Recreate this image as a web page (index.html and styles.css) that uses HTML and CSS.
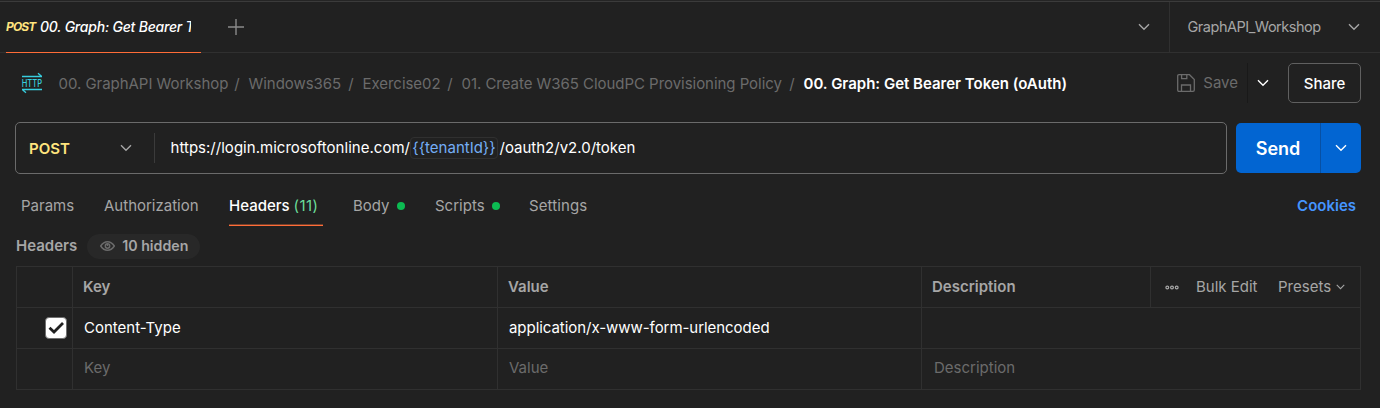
FILE: index.html
```html
<!DOCTYPE html>
<html lang="en">
<head>
<meta charset="utf-8">
<title>GraphAPI Workshop</title>
<link rel="stylesheet" href="styles.css">
</head>
<body>
<svg class="defs" width="0" height="0"><symbol id="chevron" viewBox="0 0 12 8"><path d="M1 1.2 6 6.2l5-5" fill="none" stroke="currentColor" stroke-width="1.4"/></symbol></svg>
<header class="tabbar">
  <div class="tab"><span class="tab-method">POST</span><span class="tab-title">00. Graph: Get Bearer Token</span></div>
  <svg class="plus" width="16" height="16" viewBox="0 0 16 16"><path d="M8 0v16M0 8h16" stroke="currentColor" stroke-width="1.4"/></svg>
  <div class="tab-menu"><svg class="chev"><use href="#chevron"/></svg></div>
  <div class="env"><span>GraphAPI_Workshop</span><svg class="chev"><use href="#chevron"/></svg></div>
</header>
<section class="titlebar">
  <svg class="http" width="22" height="22" viewBox="0 0 22 22"><path d="M1 4.500h20M17 1.300 20.500 4.300M21 17.500H1M5 20.700 1.500 17.700" fill="none" stroke="currentColor" stroke-width="1.3"/><text x=".7" y="15" textLength="20.300" lengthAdjust="spacingAndGlyphs">HTTP</text></svg>
  <nav class="crumbs">
    <span class="c1">00. GraphAPI Workshop</span><i>/</i><span class="c2">Windows365</span><i>/</i><span class="c3">Exercise02</span><i>/</i><span class="c4">01. Create W365 CloudPC Provisioning Policy</span><i>/</i><strong>00. Graph: Get Bearer Token (oAuth)</strong>
  </nav>
  <div class="save"><svg width="18" height="18" viewBox="0 0 18 18" fill="none" stroke="currentColor" stroke-width="1.3"><path d="M2 .7h10.500l4.800 4.800V16q0 1.300-1.300 1.300H2Q.7 17.300.7 16V2Q.7.7 2 .7zM4.600.7v4h5.200v-4M4.500 17.300v-6.300h9v6.300"/></svg><span>Save</span></div>
  <div class="save-menu"><svg class="chev"><use href="#chevron"/></svg></div>
  <button class="share">Share</button>
</section>
<section class="request">
  <div class="urlbox">
    <div class="method"><span>POST</span><svg class="chev"><use href="#chevron"/></svg></div>
    <div class="url"><span class="u1">https://login.microsoftonline.com/</span><span class="var">{{tenantId}}</span><span class="u2">/oauth2/v2.0/token</span></div>
  </div>
  <div class="send"><span>Send</span><div class="send-menu"><svg class="chev"><use href="#chevron"/></svg></div></div>
</section>
<nav class="sections">
  <span class="s1">Params</span><span class="s2">Authorization</span><span class="s3 active">Headers <b>(11)</b></span><span class="s4">Body<i class="dot"></i></span><span class="s5">Scripts<i class="dot"></i></span><span class="s6">Settings</span><a>Cookies</a>
</nav>
<div class="subhead"><span>Headers</span>
  <div class="pill"><svg width="15" height="10" viewBox="0 0 15 10" fill="none" stroke="currentColor" stroke-width="1.5"><path d="M.7 5Q3.500.8 7.500.8T14.300 5Q11.500 9.200 7.500 9.200T.7 5z"/><circle cx="7.500" cy="5" r="2.200"/><path d="M7.500 5V3"/></svg><span>10 hidden</span></div>
</div>
<main class="table">
  <div class="row head"><div></div><div>Key</div><div>Value</div><div>Description</div>
    <div class="tools"><svg width="14" height="5" viewBox="0 0 14 5" fill="none" stroke="currentColor" stroke-width="1.200"><circle cx="2.300" cy="2.500" r="1.400"/><circle cx="7" cy="2.500" r="1.400"/><circle cx="11.700" cy="2.500" r="1.400"/></svg><span class="bulk">Bulk Edit</span><span class="presets">Presets</span><svg class="chev small"><use href="#chevron"/></svg></div></div>
  <div class="row"><div class="check"><svg width="22" height="22" viewBox="0 0 22 22"><rect x=".5" y=".5" width="21" height="21" rx="3.500" fill="#fff" stroke="#707070"/><path d="m4.500 10.800 4.500 4.200L18 6" fill="none" stroke="#212121" stroke-width="2.800"/></svg></div><div>Content-Type</div><div class="value">application/x-www-form-urlencoded</div><div class="wide"></div></div>
  <div class="row placeholder"><div></div><div>Key</div><div>Value</div><div class="wide">Description</div></div>
</main>
</body>
</html>
```
FILE: styles.css
```css
* { box-sizing: border-box; }
body { margin: 0; width: 1380px; height: 408px; overflow: hidden; background: #212121; color: #a6a6a6; font: 15px/20px Inter, "Liberation Sans", sans-serif; white-space: nowrap; }
.defs { position: absolute; }
i { font-style: normal; }
svg { flex: none; display: block; }
.chev { width: 12px; height: 8px; }

.tabbar { height: 53px; display: flex; align-items: stretch; border-top: 1px solid #252525; border-bottom: 1px solid #303030; box-shadow: inset 0 1px #3b3b3b; padding-left: 6px; }
.tab { width: 195px; margin-bottom: -1px; border-bottom: 1px solid #ff6c37; display: flex; align-items: center; font-style: italic; color: #fff; font-size: 14px; }
.tab-method { width: 34px; flex: none; font-size: 12px; font-weight: 700; letter-spacing: -.9px; color: #ffe47e; }
.tab-title { width: 151px; overflow: hidden; font-weight: 500; letter-spacing: -.22px; }
.plus { align-self: center; margin-left: 27px; color: #8a8a8a; }
.tab-menu { margin-left: auto; padding-right: 19px; display: flex; align-items: center; }
.env { width: 211px; border-left: 1px solid #303030; padding: 0 20px 0 17.500px; display: flex; align-items: center; justify-content: space-between; margin-top: 1px; font-size: 14.500px; letter-spacing: -.48px; }

.titlebar { height: 60px; padding: 0 19px 0 21px; display: flex; align-items: center; }
.http { color: #38cedf; }
.http text { font: 500 11px Inter, sans-serif; fill: currentColor; }
.crumbs { display: flex; margin: 1px 0 0 15.500px; color: #6b6b6b; letter-spacing: -.04px; }
.crumbs i { width: 22px; padding-right: 1px; text-align: center; }
.crumbs strong { color: #fff; font-weight: 600; letter-spacing: 0; }
.c1 { width: 168px; }
.c2 { width: 92px; }
.c3 { width: 77px; }
.c4 { width: 320px; }
.save { margin-left: auto; display: flex; gap: 8px; align-items: center; color: #6b6b6b; }
.save-menu { height: 40px; margin-left: 9px; width: 41px; border-left: 1px solid #191919; display: flex; align-items: center; padding-left: 9px; color: #fff; }
.share { width: 73px; height: 40px; border: 1px solid #606060; border-radius: 5px; background: none; color: #fff; font: 500 15px Inter, sans-serif; padding: 0; }

.request { display: flex; justify-content: space-between; align-items: center; margin-top: 9px; padding: 0 19px 0 15px; height: 52px; }
.urlbox { width: 1212px; height: 52px; border: 1px solid #6b6b6b; border-radius: 5px; display: flex; align-items: center; }
.method { width: 139px; height: 30px; border-right: 1px solid #3b3b3b; display: flex; align-items: center; justify-content: space-between; padding: 2px 22px 0 13px; color: #ffe47e; font-weight: 600; }
.method .chev { color: #a6a6a6; margin-top: -2px; }
.url { display: flex; align-items: center; padding-left: 15.500px; color: #fff; }
.u1 { width: 239.500px; letter-spacing: .02px; }
.var { width: 88px; height: 22px; border: 1px solid #303030; border-radius: 4px; line-height: 20px; text-align: center; color: #74aef6; }
.u2 { margin-left: 1.500px; }
.send { width: 125px; height: 50px; border-radius: 5px; background: #0265d2; color: #fff; display: flex; align-items: center; font-weight: 600; font-size: 18px; }
.send > span { width: 84px; text-align: center; padding-top: 2px; }
.send-menu { width: 41px; height: 50px; border-left: 1px solid #0750a4; display: grid; place-items: center; }

.sections { display: flex; height: 52px; padding: 0 24px 0 21px; align-items: stretch; line-height: 64px; }
.s1 { width: 83px; }
.s2 { width: 125px; }
.s3 { width: 94px; margin-right: 30px; }
.s4 { width: 82px; }
.s5 { width: 94px; }
.s6 { letter-spacing: .1px; }
.active { color: #fff; border-bottom: 1px solid #ff6c37; box-shadow: inset 0 -1px #75402c; font-weight: 500; }
.active b { font-weight: 400; color: #6bdd9a; letter-spacing: .4px; }
.dot { display: inline-block; width: 8px; height: 8px; border-radius: 50%; background: #0cbb52; margin-left: 7px; vertical-align: 1px; }
.sections a { margin-left: auto; color: #4595ff; font-weight: 600; }

.subhead { height: 40px; padding-left: 16px; display: flex; align-items: center; gap: 10px; font-weight: 600; font-size: 15px; }
.pill { width: 113px; height: 25px; border-radius: 13px; background: #282828; display: flex; align-items: center; gap: 7px; padding-left: 13px; font-size: 14.200px; }
.pill svg { color: #6b6b6b; }

.table { margin-left: 16px; width: 1345px; border: solid #303030; border-width: 1px 0 0 1px; }
.row { height: 41px; display: grid; grid-template-columns: 56px 425px 424px 229px 210px; border-bottom: 1px solid #303030; color: #fff; }
.row > div { border-right: 1px solid #303030; display: flex; align-items: center; padding-left: 11px; }
.row > .wide { grid-column: 4 / 6; padding-left: 12px; }
.row > .check { padding-left: 28px; }
.value { letter-spacing: -.05px; }
.head { color: #a6a6a6; font-weight: 600; }
.head > div { padding-left: 10px; }
.head > .tools { font-weight: 400; padding-left: 14px; }
.bulk { margin-left: 17px; width: 82px; }
.presets { width: 58px; }
.chev.small { width: 9px; height: 6px; }
.placeholder { color: #6b6b6b; }
.placeholder > div { padding-bottom: 2px; }
```
